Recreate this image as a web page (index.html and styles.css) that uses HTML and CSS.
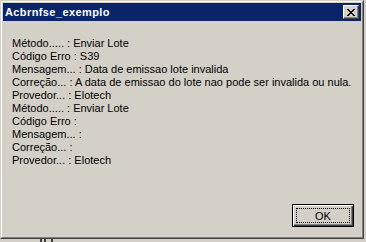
FILE: index.html
```html
<!DOCTYPE html>
<html>
<head>
<meta charset="utf-8">
<link rel="stylesheet" href="styles.css">
</head>
<body>
<div class="window">
  <div class="inner">
    <div class="titlebar">
      <span class="title">Acbrnfse_exemplo</span>
      <button class="close" aria-label="Fechar">
        <svg width="8" height="7" viewBox="0 0 8 7"><path d="M0 0h2v1h1v1h2v-1h1v-1h2v1h-1v1h-1v1h-1v1h1v1h1v1h1v1h-2v-1h-1v-1h-2v1h-1v1h-2v-1h1v-1h1v-1h1v-1h-1v-1h-1v-1h-1z" fill="#000"/></svg>
      </button>
    </div>
    <div class="content">
      <div class="lines">
        <div>Método..... : Enviar Lote</div>
        <div>Código Erro : S39</div>
        <div>Mensagem... : Data de emissao lote invalida</div>
        <div>Correção... : A data de emissao do lote nao pode ser invalida ou nula.</div>
        <div>Provedor... : Elotech</div>
        <div>Método..... : Enviar Lote</div>
        <div>Código Erro :</div>
        <div>Mensagem... :</div>
        <div>Correção... :</div>
        <div>Provedor... : Elotech</div>
      </div>
      <div class="actions">
        <button class="ok"><span class="focus">OK</span></button>
      </div>
    </div>
  </div>
</div>
<div class="under">
  <span class="mark m1"></span><span class="mark m2"></span><span class="mark m3"></span>
</div>
</body>
</html>
```
FILE: styles.css
```css
html, body {
  margin: 0;
  padding: 0;
  background: #d4d0c8;
  width: 366px;
  height: 242px;
  overflow: hidden;
  font-family: Tahoma, "Liberation Sans", Arial, sans-serif;
  font-size: 11px;
}
.window {
  width: 364px;
  height: 239px;
  box-sizing: border-box;
  border: 1px solid;
  border-color: #d4d0c8 #404040 #404040 #d4d0c8;
  background: #d4d0c8;
}
.inner {
  height: 100%;
  box-sizing: border-box;
  border: 1px solid;
  border-color: #ffffff #808080 #808080 #ffffff;
  padding: 1px;
  display: flex;
  flex-direction: column;
}
.titlebar {
  height: 18px;
  background: #0a246a;
  display: flex;
  align-items: center;
  justify-content: space-between;
  padding: 0 2px 0 2px;
}
.title {
  color: #fff;
  font-weight: bold;
  font-size: 11px;
  letter-spacing: 0.4px;
}
.close {
  width: 16px;
  height: 14px;
  padding: 0;
  margin: 0;
  box-sizing: border-box;
  background: #d4d0c8;
  border: 1px solid;
  border-color: #ffffff #404040 #404040 #ffffff;
  box-shadow: inset -1px -1px 0 #808080;
  display: flex;
  align-items: center;
  justify-content: center;
}
.close svg { display: block; margin-left: -1px; }
.content {
  flex: 1;
  display: flex;
  flex-direction: column;
  padding: 16px 0 0 9px;
}
.lines div {
  height: 13px;
  line-height: 13px;
  color: #000;
  white-space: pre;
}
.actions {
  margin-top: auto;
  display: flex;
  justify-content: flex-end;
  padding: 0 7px 9px 0;
}
.ok {
  width: 62px;
  height: 23px;
  box-sizing: border-box;
  background: #d4d0c8;
  border: 1px solid #000;
  padding: 0;
  box-shadow: inset 1px 1px 0 #ffffff, inset -1px -1px 0 #404040, inset -2px -2px 0 #808080;
  font-family: Tahoma, "Liberation Sans", Arial, sans-serif;
  font-size: 11px;
  color: #000;
  display: flex;
}
.focus {
  flex: 1;
  margin: 3px;
  border: 1px dotted #000;
  display: flex;
  align-items: center;
  justify-content: center;
}
.under {
  position: relative;
  height: 3px;
}
.mark {
  position: absolute;
  top: 0;
  width: 2px;
  height: 3px;
  background: #404040;
}
.m1 { left: 40px; }
.m2 { left: 44px; }
.m3 { left: 51px; }
```
